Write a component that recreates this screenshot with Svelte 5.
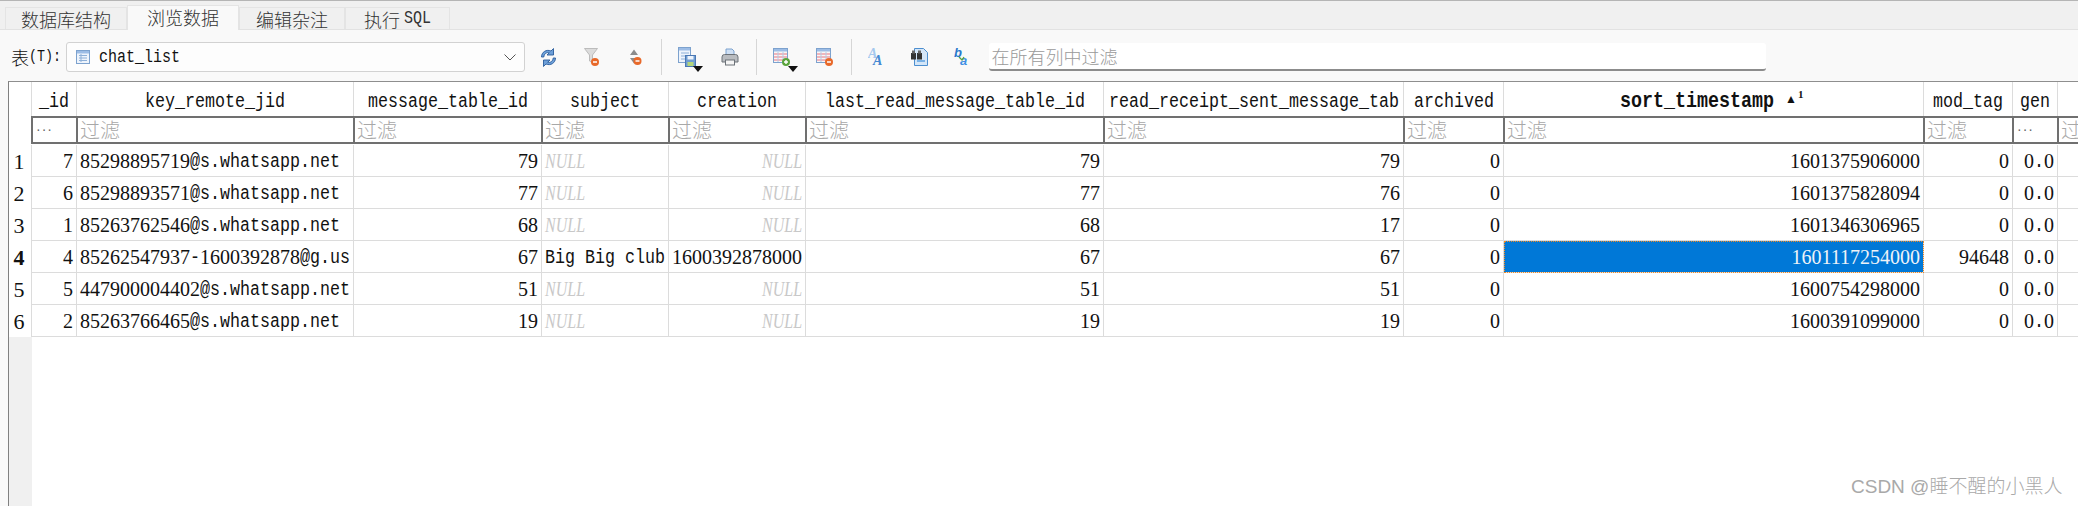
<script>
  const columns = [
    { name: "_id", dots: true },
    { name: "key_remote_jid" },
    { name: "message_table_id" },
    { name: "subject" },
    { name: "creation" },
    { name: "last_read_message_table_id" },
    { name: "read_receipt_sent_message_tab" },
    { name: "archived" },
    { name: "sort_timestamp", sorted: true },
    { name: "mod_tag" },
    { name: "gen", dots: true },
    { name: "m" },
  ];

  const rows = [
    ["7", "85298895719@s.whatsapp.net", "79", null, null, "79", "79", "0", "1601375906000", "0", "0.0"],
    ["6", "85298893571@s.whatsapp.net", "77", null, null, "77", "76", "0", "1601375828094", "0", "0.0"],
    ["1", "85263762546@s.whatsapp.net", "68", null, null, "68", "17", "0", "1601346306965", "0", "0.0"],
    ["4", "85262547937-1600392878@g.us", "67", "Big Big club", "1600392878000", "67", "67", "0", "1601117254000", "94648", "0.0"],
    ["5", "447900004402@s.whatsapp.net", "51", null, null, "51", "51", "0", "1600754298000", "0", "0.0"],
    ["2", "85263766465@s.whatsapp.net", "19", null, null, "19", "19", "0", "1600391099000", "0", "0.0"],
  ];

  // text columns sit on the left, everything else on the right
  const leftAligned = [1, 3];

  // digits come from the serif face, the rest from the mono one squeezed to half width
  function parts(text) {
    return text.match(/\d+|\D+/g).map((part) => ({ part, digits: /\d/.test(part) }));
  }
</script>

{#snippet txt(text, charWidth = 10)}
  <span class="txt">
    {#each parts(text) as p}
      {#if p.digits}
        <span class="digits">{p.part}</span>
      {:else}
        <span class="mono" style="width: {p.part.length * charWidth}px">{p.part}</span>
      {/if}
    {/each}
  </span>
{/snippet}

<div class="page">
  <div class="tabs">
    <div class="tab">数据库结构</div>
    <div class="tab active">浏览数据</div>
    <div class="tab">编辑杂注</div>
    <div class="tab">执行 <span class="mono tab-sql" style="width: 27px">SQL</span></div>
  </div>

  <div class="toolbar">
    <span class="label">表<span class="mono small" style="width: 32px">(T):</span></span>
    <div class="combo">
      <svg class="combo-icon" width="14" height="14" viewBox="0 0 14 14">
        <rect x="0.5" y="0.5" width="13" height="13" fill="#eef4fc" stroke="#7da2ce" />
        <rect x="1" y="1" width="12" height="2.5" fill="#9dbde6" />
        <path d="M3 5.5h8M3 8h8M3 10.5h8M5 4v8" stroke="#8eb0d8" fill="none" />
      </svg>
      <span class="mono combo-text" style="width: 81px">chat_list</span>
      <svg class="chevron" width="12" height="7" viewBox="0 0 12 7">
        <path d="M0.5 0.5 6 6l5.5-5.5" fill="none" stroke="#555" />
      </svg>
    </div>

    <div class="tool first">
      <svg width="17" height="19" viewBox="0 0 17 19">
        <path d="M1.500 9C1.500 4 6.500 1 11 3l2.500-2.500v6.500H7l2.300-2.300C6.500 4 4 6 3.800 9Z" fill="#6d9fd8" stroke="#2a5c9c" stroke-width="0.9" />
        <path d="M15.500 10c0 5-5 8-9.500 6l-2.500 2.500V12H10l-2.300 2.300c2.800.7 5.300-1.300 5.500-4.300Z" fill="#6d9fd8" stroke="#2a5c9c" stroke-width="0.9" />
      </svg>
    </div>
    <div class="tool">
      <svg width="16" height="20" viewBox="0 0 16 20">
        <path d="M0.500 1.500h13L8.500 8v8l-3-2V8Z" fill="#dcdcdc" stroke="#b0b0b0" stroke-width="0.8" />
        <circle cx="11" cy="15" r="4" fill="#e8692a" />
        <path d="M9 15h4" stroke="#fff" stroke-width="1.500" />
      </svg>
    </div>
    <div class="tool">
      <svg width="14" height="20" viewBox="0 0 14 20">
        <path d="M2 8 6 2.500 10 8ZM2 11h8l-4 5.500Z" fill="#8c8c8c" />
        <circle cx="9.500" cy="14" r="4" fill="#e8692a" />
        <path d="M7.500 14h4" stroke="#fff" stroke-width="1.500" />
      </svg>
    </div>
    <div class="sep"></div>
    <div class="tool">
      <svg width="18" height="20" viewBox="0 0 18 20">
        <rect x="0.500" y="0.500" width="12" height="15" fill="#eef4fc" stroke="#7da2ce" />
        <rect x="1" y="1" width="11" height="2.500" fill="#9dbde6" />
        <path d="M3 6h8M3 9h8M3 12h5" stroke="#8eb0d8" />
        <rect x="7.500" y="8.500" width="10" height="11" fill="#6f9dd2" stroke="#4b78b4" />
        <rect x="9.500" y="9" width="6" height="3.500" fill="#eef4fc" />
        <rect x="9.500" y="15" width="6" height="4" fill="#b4d67c" />
      </svg>
      <span class="drop"></span>
    </div>
    <div class="tool">
      <svg width="18" height="18" viewBox="0 0 18 18">
        <path d="M5 7V1h6l2 2v4Z" fill="#cfe0f4" stroke="#7da2ce" />
        <path d="M1 9q0-2.500 2.500-2.500h11Q17 6.500 17 9v5H1Z" fill="#b9bcc0" stroke="#6c7278" />
        <rect x="4.500" y="12" width="9" height="5" fill="#f5f5f5" stroke="#6c7278" />
      </svg>
    </div>
    <div class="sep"></div>
    <div class="tool">
      <svg width="18" height="19" viewBox="0 0 18 19">
        <rect x="0.500" y="0.500" width="14" height="14" fill="#f7f7f7" stroke="#7da2ce" />
        <rect x="1" y="1" width="13" height="2.500" fill="#9dbde6" />
        <path d="M1 6h13M1 9h13M1 12h13" stroke="#f0a0a8" stroke-width="1.400" />
        <path d="M5 4v10M10 4v10" stroke="#b5cbe6" />
        <circle cx="13" cy="14" r="4" fill="#5aa43c" />
        <path d="M11 14h4M13 12v4" stroke="#fff" stroke-width="1.400" />
      </svg>
      <span class="drop"></span>
    </div>
    <div class="tool">
      <svg width="18" height="19" viewBox="0 0 18 19">
        <rect x="0.500" y="0.500" width="14" height="14" fill="#f7f7f7" stroke="#7da2ce" />
        <rect x="1" y="1" width="13" height="2.500" fill="#9dbde6" />
        <path d="M1 6h13M1 9h13M1 12h13" stroke="#f0a0a8" stroke-width="1.400" />
        <path d="M5 4v10M10 4v10" stroke="#b5cbe6" />
        <circle cx="13" cy="14" r="4" fill="#e8692a" />
        <path d="M11 14h4" stroke="#fff" stroke-width="1.500" />
      </svg>
    </div>
    <div class="sep"></div>
    <div class="tool">
      <svg width="18" height="18" viewBox="0 0 18 18">
        <text x="0" y="10" class="glyph" fill="#a5c8ee">A</text>
        <text x="5" y="17" class="glyph" fill="#4488d2">A</text>
      </svg>
    </div>
    <div class="tool">
      <svg width="17" height="18" viewBox="0 0 17 18">
        <path d="M3.500 0.500h9l4 4v13h-13Z" fill="#d4e6f8" stroke="#4d8fd0" />
        <path d="M6 13h8" stroke="#5da0e0" stroke-width="1.500" />
        <rect x="0" y="5" width="5" height="6.500" fill="#333" />
        <rect x="6" y="5" width="5" height="6.500" fill="#333" />
        <rect x="1" y="2.500" width="3" height="3" fill="#666" />
        <rect x="7" y="2.500" width="3" height="3" fill="#666" />
      </svg>
    </div>
    <div class="tool">
      <svg width="18" height="20" viewBox="0 0 18 20">
        <text x="0" y="10" class="glyph-b" fill="#2a78cc">b</text>
        <text x="6" y="18" class="glyph-b" fill="#3f90e4">a</text>
        <path d="M5 10l3 3 2-3" fill="none" stroke="#5aa43c" stroke-width="1.300" />
      </svg>
    </div>

    <div class="search">在所有列中过滤</div>
  </div>

  <div class="frame">
    <div class="grid">
      <div class="corner"></div>
      {#each columns as col}
        <div class="head" class:sorted={col.sorted}>
          {@render txt(col.name, col.sorted ? 11 : 10)}
          {#if col.sorted}
            <span class="sort-mark">▲<sup>1</sup></span>
          {/if}
        </div>
      {/each}

      <div class="corner filter-corner"></div>
      {#each columns as col}
        <div class="filter-wrap">
          <div class="filter">
            {#if col.dots}
              <span class="dots">···</span>
            {:else}
              过滤
            {/if}
          </div>
        </div>
      {/each}

      {#each rows as row, r}
        <div class="row-no" class:current={r === 3}>{r + 1}</div>
        {#each row as value, c}
          <div
            class="cell"
            class:left={leftAligned.includes(c)}
            class:selected={r === 3 && c === 8}
          >
            {#if value === null}
              <span class="null">NULL</span>
            {:else}
              {@render txt(value)}
            {/if}
          </div>
        {/each}
        <div class="cell"></div>
      {/each}
    </div>
    <div class="gutter"></div>
  </div>

  <div class="watermark">CSDN @睡不醒的小黑人</div>
</div>

<style>
  :global(body) {
    margin: 0;
    overflow: hidden;
  }

  .page {
    position: relative;
    display: flex;
    flex-direction: column;
    width: 2078px;
    height: 506px;
    overflow: hidden;
    background: #f9f9f9;
    color: #111;
    font-family: "Noto Sans CJK SC", sans-serif;
  }

  .tabs {
    display: grid;
    grid-template-columns: 122px 112px 106px 105px;
    align-items: end;
    height: 30px;
    padding-left: 5px;
    border-top: 1px solid #b5b5b5;
    border-bottom: 1px solid #e2e2e2;
    background: #f0f0f0;
    box-sizing: border-box;
  }

  .tab {
    display: flex;
    align-items: center;
    justify-content: center;
    height: 22px;
    border: 1px solid #e4e4e4;
    border-bottom: 0;
    box-sizing: border-box;
    font-size: 18px;
    font-weight: 300;
    color: #333;
    white-space: pre;
  }

  .tab.active {
    height: 25px;
    margin-bottom: -1px;
    background: #f9f9f9;
    padding-bottom: 3px;
  }

  .toolbar {
    display: flex;
    align-items: center;
    height: 51px;
    padding: 3px 0 0 11px;
    box-sizing: border-box;
  }

  .label {
    display: flex;
    align-items: center;
    width: 54px;
    font-size: 18px;
    font-weight: 300;
  }

  .txt {
    display: inline-flex;
    flex-shrink: 0;
    white-space: pre;
  }

  .digits {
    font-family: "Liberation Serif", serif;
    font-size: 20px;
    line-height: 23px;
  }

  .mono {
    display: inline-block;
    flex-shrink: 0;
    font-family: "Liberation Mono", monospace;
    font-size: 20px;
    line-height: 23px;
    transform: scaleX(0.8333);
    transform-origin: left;
    white-space: pre;
  }

  .small {
    font-size: 16px;
  }

  .tab-sql {
    font-size: 18px;
  }

  .combo {
    display: flex;
    align-items: center;
    width: 459px;
    height: 30px;
    margin-left: 1px;
    padding: 0 8px 0 9px;
    border: 1px solid #d2d2d2;
    border-radius: 3px;
    background: #fdfdfd;
    box-sizing: border-box;
  }

  .combo-text {
    margin-left: 9px;
    margin-right: auto;
    font-size: 18px;
  }

  .tool {
    position: relative;
    display: flex;
    align-items: center;
    justify-content: center;
    flex-shrink: 0;
    width: 43px;
    height: 36px;
  }

  .tool.first {
    margin-left: 2px;
  }

  .drop {
    position: absolute;
    left: 28px;
    top: 27px;
    width: 0;
    height: 0;
    border: 5px solid transparent;
    border-top: 6px solid #111;
    border-bottom: 0;
  }

  .sep {
    flex-shrink: 0;
    width: 1px;
    height: 36px;
    margin: 0 3px 0 5px;
    background: #d6d6d6;
  }

  .glyph {
    font-family: "Liberation Serif", serif;
    font-size: 14px;
    font-style: italic;
    font-weight: 700;
  }

  .glyph-b {
    font-family: "Liberation Sans", sans-serif;
    font-size: 13px;
    font-style: italic;
    font-weight: 700;
  }

  .search {
    display: flex;
    align-items: center;
    width: 777px;
    height: 28px;
    margin-left: 4.500px;
    padding-left: 3px;
    border-bottom: 2px solid #8c8c8c;
    border-radius: 3px;
    background: #fff;
    box-sizing: border-box;
    font-size: 18px;
    font-weight: 300;
    color: #9a9a9a;
  }

  .frame {
    flex: 1;
    display: flex;
    flex-direction: column;
    margin-left: 8px;
    border-top: 1px solid #8e8e8e;
    border-left: 1px solid #808080;
    background: #fff;
    min-height: 0;
  }

  .grid {
    display: grid;
    grid-template-columns: 23px 45px 277px 188px 127px 137px 298px 300px 100px 420px 89px 45px 60px;
    grid-template-rows: 34px 29px repeat(6, 32px);
  }

  .corner {
    background: #fff;
    border-right: 1px solid #dcdcdc;
  }

  .filter-corner {
    border-right: 0;
  }

  .head {
    display: flex;
    align-items: center;
    justify-content: center;
    position: relative;
    border-right: 1px solid #dcdcdc;
    overflow: hidden;
    padding-top: 4px;
    box-sizing: border-box;
  }

  .head.sorted {
    padding-right: 34px;
  }

  .head.sorted .mono {
    font-size: 22px;
    font-weight: 700;
  }

  .sort-mark {
    position: absolute;
    left: 281px;
    top: 7px;
    font-family: "Liberation Sans", sans-serif;
    font-size: 12px;
    line-height: 20px;
  }

  .sort-mark sup {
    font-family: "Liberation Serif", serif;
    font-size: 11px;
    font-weight: 700;
    line-height: 0;
    margin-left: 1px;
  }

  .filter-wrap {
    padding-bottom: 1px;
    box-sizing: border-box;
  }

  .filter {
    display: flex;
    align-items: center;
    height: 28px;
    padding-left: 2px;
    padding-bottom: 2px;
    border-top: 2px solid #707070;
    border-bottom: 2px solid #707070;
    border-left: 2px solid #707070;
    margin-left: -1px;
    box-sizing: border-box;
    font-size: 20px;
    font-weight: 300;
    color: #a8a8a8;
    white-space: nowrap;
    overflow: hidden;
  }

  .dots {
    padding-left: 1px;
    font-family: "Liberation Sans", sans-serif;
    font-size: 14px;
    letter-spacing: 1px;
    color: #666;
  }

  .row-no {
    display: flex;
    align-items: center;
    justify-content: center;
    border-right: 1px solid #dcdcdc;
    font-family: "Liberation Serif", serif;
    font-size: 22px;
    box-sizing: border-box;
    padding: 2px 2px 0 0;
  }

  .row-no.current {
    font-weight: 700;
  }

  .cell {
    display: flex;
    align-items: center;
    justify-content: flex-end;
    padding: 2px 3px 0;
    border-right: 1px solid #dcdcdc;
    border-bottom: 1px solid #dcdcdc;
    box-sizing: border-box;
    overflow: hidden;
  }

  .cell.left {
    justify-content: flex-start;
  }

  .null {
    display: inline-block;
    width: 40px;
    flex-shrink: 0;
    font-family: "Liberation Serif", serif;
    font-size: 20px;
    font-style: italic;
    line-height: 23px;
    color: #c8c8c8;
    transform: scaleX(0.8);
    transform-origin: left;
    white-space: pre;
  }

  .cell.selected {
    background: #0078d7;
    color: #eef3f8;
    outline: 1px dotted #f08a24;
    outline-offset: -1px;
  }

  .gutter {
    flex: 1;
    width: 23px;
    background: #f0f0f0;
  }

  .watermark {
    position: absolute;
    left: 1851px;
    top: 473px;
    font-family: "Liberation Sans", "Noto Sans CJK SC", sans-serif;
    font-size: 19px;
    line-height: 28px;
    font-weight: 300;
    color: #a9a9a9;
    white-space: nowrap;
  }
</style>
